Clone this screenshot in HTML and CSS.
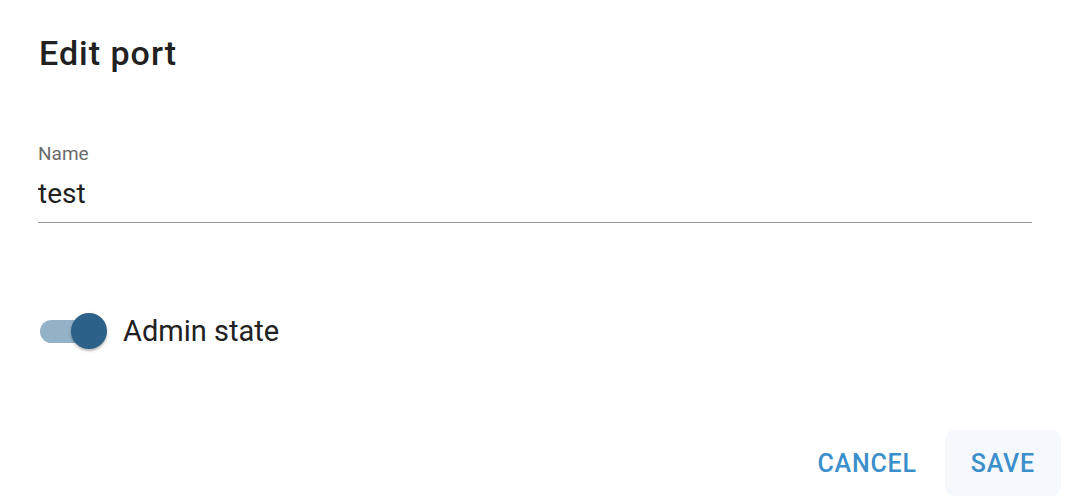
FILE: index.html
```html
<!DOCTYPE html>
<html lang="en">
<head>
    <meta charset="UTF-8">
    <meta name="viewport" content="width=device-width, initial-scale=1.0">
    <title>Edit port</title>
    <link rel="stylesheet" href="styles.css">
</head>
<body>

<div class="dialog">
    <h2 class="dialog-title">Edit port</h2>

    <div class="dialog-content">
        <div class="field">
            <label class="field-label" for="portName">Name</label>
            <input class="field-input" id="portName" type="text" value="test">
        </div>

        <label class="switch-row">
            <span class="switch">
                <span class="switch-track"></span>
                <span class="switch-thumb"></span>
            </span>
            <span class="switch-label">Admin state</span>
        </label>
    </div>

    <div class="dialog-actions">
        <button class="button">Cancel</button>
        <button class="button button-save">Save</button>
    </div>
</div>

</body>
</html>
```

FILE: styles.css
```css
body {
    margin: 0;
    background-color: white;
    color: #212121;
    font-family: Roboto, "Liberation Sans", sans-serif;
}
.dialog {
    width: 1070px;
    height: 504px;
    display: flex;
    flex-direction: column;
}
.dialog-title {
    margin: 0;
    padding: 32px 39px 0;
    font-size: 34px;
    font-weight: 500;
    letter-spacing: 1px;
    line-height: 42px;
}
.dialog-content {
    padding: 0 38px;
    flex: 1;
}
.field {
    margin-top: 68px;
    display: flex;
    flex-direction: column;
}
.field-label {
    font-size: 19px;
    line-height: 24px;
    color: #6b6b6b;
}
.field-input {
    border: none;
    border-bottom: 1px solid #949494;
    padding: 11px 0 12px;
    font-family: inherit;
    font-size: 28px;
    color: #212121;
    outline: none;
    background: transparent;
}
.switch-row {
    margin-top: 90px;
    display: flex;
    align-items: center;
    gap: 16px;
}
.switch {
    position: relative;
    width: 69px;
    height: 36px;
    display: flex;
    align-items: center;
}
.switch-track {
    margin-left: 2px;
    width: 62px;
    height: 23px;
    border-radius: 12px;
    background-color: #94b2c6;
}
.switch-thumb {
    position: absolute;
    right: 0;
    top: 0;
    width: 36px;
    height: 36px;
    border-radius: 50%;
    background-color: #2c6289;
    box-shadow: 0 2px 2px rgba(0, 0, 0, 0.2), 0 1px 4px rgba(0, 0, 0, 0.12);
}
.switch-label {
    font-size: 29px;
}
.dialog-actions {
    display: flex;
    justify-content: flex-end;
    padding: 0 9px 8px 0;
}
.button {
    height: 66px;
    padding: 0 26px;
    border: none;
    border-radius: 9px;
    background: transparent;
    color: #3b8fcb;
    font-family: inherit;
    font-size: 25px;
    font-weight: 500;
    letter-spacing: 0.8px;
    text-transform: uppercase;
    cursor: pointer;
}
.button-save {
    margin-left: 2px;
    background-color: #f5f9fd;
}
```
